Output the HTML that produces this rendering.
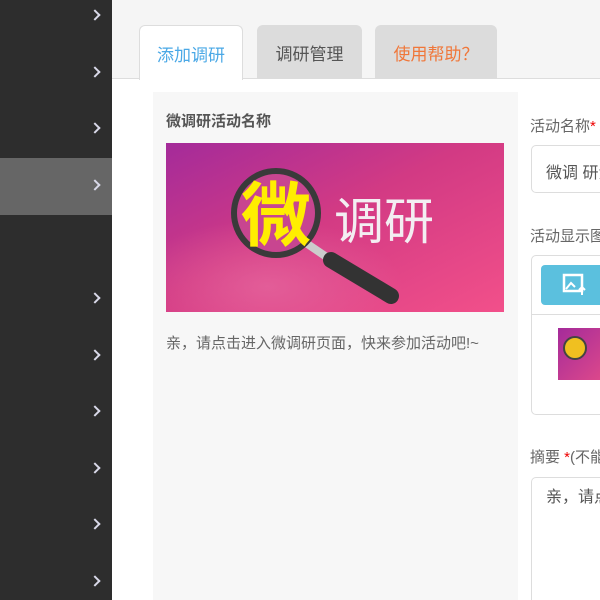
<!DOCTYPE html>
<html><head><meta charset="utf-8"><style>
*{margin:0;padding:0;box-sizing:border-box}
html,body{width:600px;height:600px;overflow:hidden}
body{background:#f5f5f5;font-family:"Liberation Sans","Noto Sans CJK SC",sans-serif;position:relative}
.sb{position:absolute;left:0;top:0;width:112px;height:600px;background:#2d2d2d}
.act{position:absolute;left:0;top:158px;width:112px;height:57px;background:#666}
.chev{position:absolute;left:91px;width:8px;height:8px;border-right:2px solid #d8d8e8;border-top:2px solid #d8d8e8;transform:rotate(45deg)}
.tab{position:absolute;top:25px;height:54px;border-radius:6px 6px 0 0;font-size:17px;text-align:center;line-height:56px;font-family:"Noto Sans CJK SC",sans-serif}
.abs{position:absolute}
</style></head><body>
<div class="sb"></div><div class="act"></div>
<div class="chev" style="top:11px"></div><div class="chev" style="top:68px"></div><div class="chev" style="top:124px"></div><div class="chev" style="top:181px"></div><div class="chev" style="top:294px"></div><div class="chev" style="top:351px"></div><div class="chev" style="top:407px"></div><div class="chev" style="top:464px"></div><div class="chev" style="top:520px"></div><div class="chev" style="top:577px"></div>
<div class="abs" style="left:112px;top:78px;width:488px;height:522px;background:#fff;border-top:1px solid #ddd"></div>
<div class="tab" style="left:139px;width:104px;background:#fff;border:1px solid #ddd;border-bottom:none;color:#4aa8e6;height:55px">添加调研</div>
<div class="tab" style="left:257px;width:105px;background:#dcdcdc;color:#555">调研管理</div>
<div class="tab" style="left:375px;width:122px;background:#dcdcdc;color:#f0773a">使用帮助？</div>
<div class="abs" style="left:153px;top:92px;width:365px;height:508px;background:#f7f7f7"></div>
<div class="abs" style="left:166px;top:110px;font-size:15px;font-weight:bold;color:#555">微调研活动名称</div>
<svg class="abs" style="left:166px;top:143px" width="338" height="169" viewBox="0 0 338 169">
<defs><linearGradient id="g" x1="0" y1="0" x2="1" y2="1"><stop offset="0" stop-color="#a42b9a"/><stop offset=".45" stop-color="#d23a84"/><stop offset="1" stop-color="#f2508a"/></linearGradient>
<radialGradient id="r" cx=".3" cy=".85" r=".4"><stop offset="0" stop-color="#e76aa0" stop-opacity=".7"/><stop offset="1" stop-color="#e76aa0" stop-opacity="0"/></radialGradient></defs>
<rect width="338" height="169" fill="url(#g)"/><rect width="338" height="169" fill="url(#r)"/>
<line x1="140" y1="100" x2="165" y2="117" stroke="#ccc" stroke-width="8"/>
<line x1="165" y1="117" x2="225" y2="153" stroke="#333" stroke-width="16" stroke-linecap="round"/>
<circle cx="110" cy="70" r="42" fill="#c84590" stroke="#3a3a3a" stroke-width="6"/>
<text x="110" y="97" font-size="70" font-weight="bold" fill="#ffee00" text-anchor="middle" font-family="Noto Sans CJK SC">微</text>
<text x="168" y="96" font-size="50" fill="#f3eef2" font-family="Noto Sans CJK SC">调研</text>
</svg>
<div class="abs" style="left:166px;top:332px;font-size:15px;color:#666;white-space:nowrap">亲，请点击进入微调研页面，快来参加活动吧!~</div>
<div class="abs" style="left:530px;top:115px;font-size:15px;color:#666;white-space:nowrap">活动名称<span style="color:#e00">*</span></div>
<div class="abs" style="left:531px;top:145px;width:90px;height:48px;border:1px solid #ddd;border-radius:5px;background:#fff;font-size:16px;color:#555;padding:13px 0 0 14px;white-space:nowrap">微调 研活</div>
<div class="abs" style="left:530px;top:225px;font-size:15px;color:#666;white-space:nowrap">活动显示图片</div>
<div class="abs" style="left:531px;top:255px;width:90px;height:160px;border:1px solid #ddd;border-radius:5px;background:#fff"></div>
<div class="abs" style="left:541px;top:265px;width:70px;height:40px;background:#5bc0de;border-radius:4px"></div>
<svg class="abs" style="left:562px;top:273px" width="26" height="24"><rect x="2" y="2" width="18" height="16" fill="none" stroke="#fff" stroke-width="2.5"/><path d="M4 16l5-6 4 4" stroke="#fff" stroke-width="2" fill="none"/><path d="M20 22v-8M17 17l3-3 3 3" stroke="#fff" stroke-width="2" fill="none"/></svg>
<div class="abs" style="left:531px;top:314px;width:70px;height:1px;background:#ddd"></div>
<div class="abs" style="left:558px;top:328px;width:50px;height:52px;background:linear-gradient(135deg,#a42b9a,#e04a8a)"><div style="position:absolute;left:5px;top:8px;width:24px;height:24px;border-radius:50%;background:#f0c020;border:2px solid #444"></div></div>
<div class="abs" style="left:530px;top:446px;font-size:15px;color:#666;white-space:nowrap">摘要 <span style="color:#e00">*</span>(不能</div>
<div class="abs" style="left:531px;top:477px;width:90px;height:123px;border:1px solid #ddd;border-bottom:none;border-radius:5px 5px 0 0;background:#fff;font-size:16px;color:#555;padding:5px 0 0 14px;white-space:nowrap">亲，请点</div>
</body></html>
